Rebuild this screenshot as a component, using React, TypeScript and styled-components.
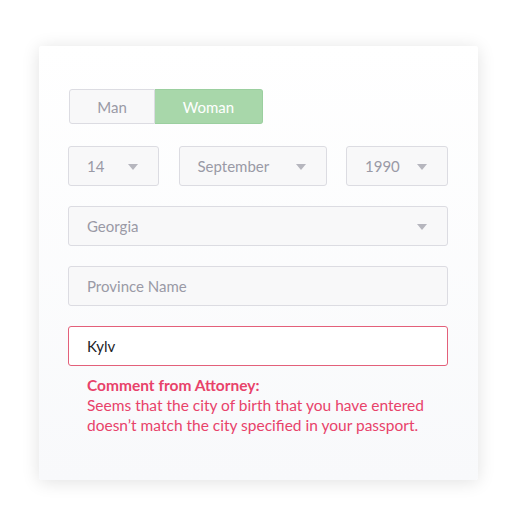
import React from "react";
import styled, { createGlobalStyle } from "styled-components";

const Global = createGlobalStyle`
  html, body { margin: 0; padding: 0; background: #ffffff; }
  body { font-family: "Lato", "Open Sans", sans-serif; -webkit-font-smoothing: antialiased; }
  * { box-sizing: border-box; }
`;

const Page = styled.div`
  width: 519px;
  height: 514px;
  padding: 46px 41px 0 39px;
`;

const Card = styled.div`
  width: 439px;
  height: 434px;
  border-radius: 3px;
  background: linear-gradient(180deg, #ffffff 0%, #f8f9fb 100%);
  box-shadow: 0 2px 18px rgba(0, 0, 0, 0.12);
  padding: 43px 30px 0 29px;
  display: flex;
  flex-direction: column;
  gap: 20px;
`;

const Toggle = styled.div`
  display: flex;
  width: 195px;
  height: 35px;
  margin-left: 1px;
`;

const ToggleBtn = styled.div<{ $active?: boolean; $w: number }>`
  width: ${(p) => p.$w}px;
  display: flex;
  align-items: center;
  justify-content: center;
  font-size: 15px;
  color: ${(p) => (p.$active ? "#ffffff" : "#9a9aa6")};
  background: ${(p) => (p.$active ? "#a8d7aa" : "#f8f8f9")};
  border: 1px solid ${(p) => (p.$active ? "#9bcf9f" : "#dcdce2")};
  border-radius: ${(p) => (p.$active ? "0 3px 3px 0" : "3px 0 0 3px")};
  border-left-width: ${(p) => (p.$active ? "0" : "1px")};
`;

const Row = styled.div`
  display: flex;
  justify-content: space-between;
  margin-top: 2px;
`;

const Field = styled.div<{ $w?: number; $error?: boolean }>`
  width: ${(p) => (p.$w ? `${p.$w}px` : "100%")};
  height: 40px;
  display: flex;
  align-items: center;
  justify-content: space-between;
  padding: 0 20px 0 18px;
  border: 1px solid ${(p) => (p.$error ? "#e3607a" : "#dcdce2")};
  border-radius: 3px;
  background: ${(p) => (p.$error ? "#ffffff" : "#f8f8f9")};
  font-size: 15px;
  color: ${(p) => (p.$error ? "#222228" : "#9a9aa6")};
`;

const Arrow = styled.span`
  width: 0;
  height: 0;
  border-left: 5px solid transparent;
  border-right: 5px solid transparent;
  border-top: 6px solid #b6b6be;
  margin-top: 2px;
`;

const Comment = styled.div`
  margin-top: -11px;
  padding-left: 19px;
  color: #e8426a;
  font-size: 15.5px;
  line-height: 20px;
`;

const CommentTitle = styled.div`
  font-weight: 700;
`;

export default function App() {
  return (
    <>
      <Global />
      <Page>
        <Card>
          <Toggle>
            <ToggleBtn $w={86}>Man</ToggleBtn>
            <ToggleBtn $w={108} $active>Woman</ToggleBtn>
          </Toggle>
          <Row>
            <Field $w={91}>14<Arrow /></Field>
            <Field $w={148}>September<Arrow /></Field>
            <Field $w={102}>1990<Arrow /></Field>
          </Row>
          <Field>Georgia<Arrow /></Field>
          <Field>Province Name</Field>
          <Field $error>Kylv</Field>
          <Comment>
            <CommentTitle>Comment from Attorney:</CommentTitle>
            Seems that the city of birth that you have entered doesn’t match the city specified in your passport.
          </Comment>
        </Card>
      </Page>
    </>
  );
}
